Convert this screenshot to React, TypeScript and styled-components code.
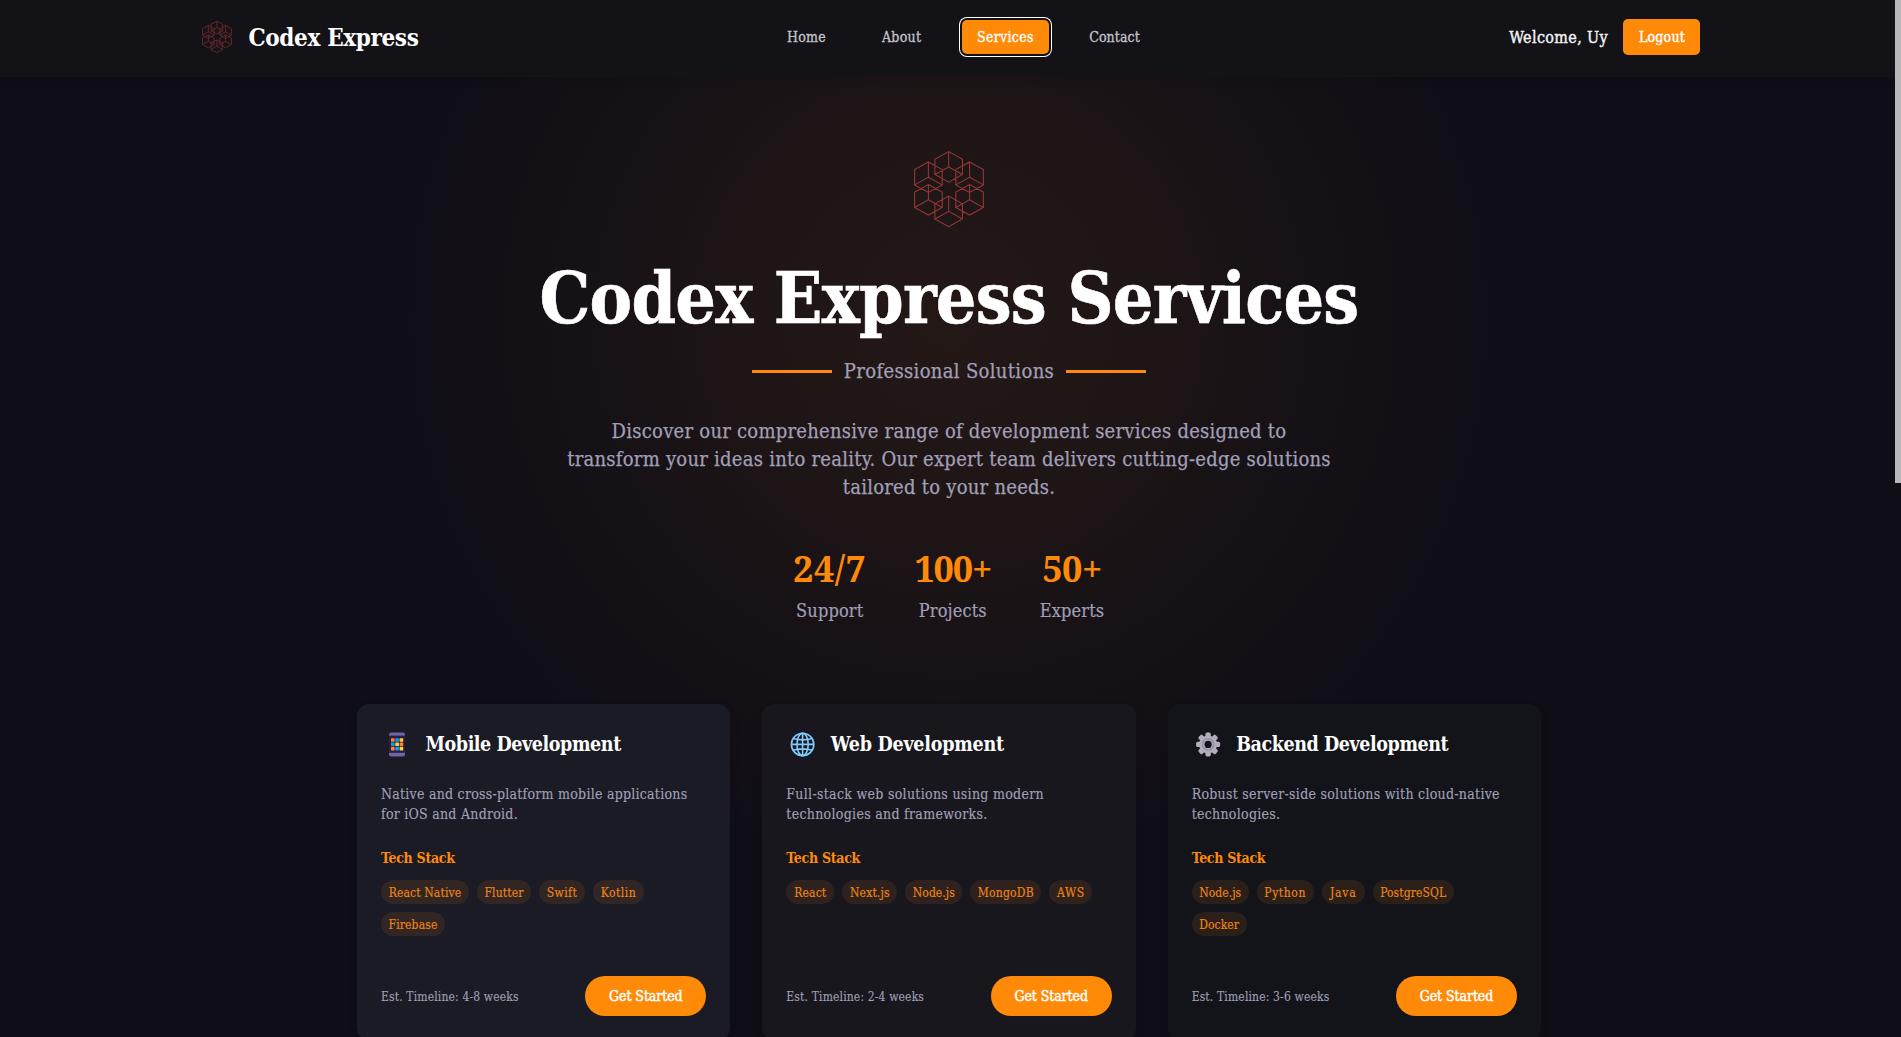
import React from "react";
import styled, { createGlobalStyle } from "styled-components";

const ORANGE = "#ff8a08";
const MUTED = "#a09fb6";
const SLAB = `"Roboto Slab", "DejaVu Serif Condensed", "DejaVu Serif", serif`;

const GlobalStyle = createGlobalStyle`
  *, *::before, *::after { box-sizing: border-box; }
  html, body { margin: 0; height: 100%; overflow: hidden; background: #0f0d16; }
  body { font-family: ${SLAB}; color: #fff; }
  h1, h2, h3, p { margin: 0; }
  button { font-family: inherit; border: 0; cursor: pointer; }
`;

const Page = styled.div`
  position: relative;
  height: 1037px;
  overflow: hidden;
  display: flex;
  flex-direction: column;
  background: radial-gradient(circle 560px at 949px 320px,
    rgba(255, 140, 20, 0.088) 0%, rgba(255, 140, 20, 0.062) 36%,
    rgba(225, 150, 30, 0.022) 74%, rgba(225, 150, 40, 0) 100%), #0f0d16;
`;

const ScrollThumb = styled.div`
  position: absolute;
  top: 0;
  right: 0;
  width: 6px;
  height: 483px;
  background: #b8b8ba;
`;

const Header = styled.header`
  flex: none;
  height: 77px;
  padding-bottom: 3px;
  display: flex;
  justify-content: center;
  background: #131217;
  box-shadow: 0 3px 10px rgba(0, 0, 0, 0.1);
`;

const HeaderInner = styled.div`
  width: 1500px;
  display: flex;
  align-items: center;
  justify-content: space-between;
`;

const Brand = styled.a`
  display: flex;
  align-items: center;
  gap: 16px;
  font-weight: 700;
  font-size: 24px;
  line-height: 32px;
  letter-spacing: -0.36px;
`;

const BrandName = styled.span`
  padding-top: 2px;
`;

const Nav = styled.nav`
  display: flex;
  align-items: center;
  gap: 25.3px;
  padding-right: 1px;
`;

const NavLink = styled.a<{ $w: number; $track: number; $active?: boolean }>`
  width: ${(p) => p.$w}px;
  height: 34px;
  line-height: 34px;
  text-align: center;
  white-space: nowrap;
  font-size: 14px;
  letter-spacing: ${(p) => p.$track}px;
  border-radius: 5px;
  color: ${(p) => (p.$active ? "#fff" : "#c4c3c9")};
  -webkit-text-stroke: 0.3px currentColor;
  background: ${(p) => (p.$active ? ORANGE : "transparent")};
  box-shadow: ${(p) => (p.$active ? "0 0 0 2px #101010, 0 0 0 3px #fff" : "none")};
`;

const Account = styled.div`
  display: flex;
  align-items: center;
  gap: 15.5px;
`;

const Welcome = styled.span`
  font-size: 16px;
  letter-spacing: 0.35px;
  color: #f2f2f4;
  -webkit-text-stroke: 0.4px currentColor;
`;

const LogoutButton = styled.button`
  width: 77px;
  height: 36px;
  padding: 0;
  border-radius: 5px;
  background: ${ORANGE};
  color: #fff;
  font-size: 14px;
  letter-spacing: 0.2px;
  -webkit-text-stroke: 0.4px currentColor;
`;

const Main = styled.main`
  width: 1898px;
  display: flex;
  flex-direction: column;
  align-items: center;
`;

const Hero = styled.section`
  display: flex;
  flex-direction: column;
  align-items: center;
  padding-top: 71.5px;
`;

const HeroTitle = styled.h1`
  margin-top: 26px;
  font-size: 71px;
  line-height: 84px;
  letter-spacing: -0.78px;
  font-weight: 700;
  white-space: nowrap;
  -webkit-text-stroke: 0.6px currentColor;
`;

const Subtitle = styled.div`
  margin-top: 19.5px;
  display: flex;
  align-items: center;
  gap: 12px;
  font-size: 20px;
  line-height: 24px;
  letter-spacing: 0.34px;
  color: ${MUTED};
  -webkit-text-stroke: 0.25px currentColor;
`;

const Rule = styled.span`
  width: 80px;
  height: 3px;
  background: ${ORANGE};
`;

const Lead = styled.p`
  margin-top: 34px;
  width: 800px;
  text-align: center;
  font-size: 20px;
  line-height: 28px;
  letter-spacing: 0.25px;
  color: ${MUTED};
  -webkit-text-stroke: 0.25px currentColor;
`;

const Stats = styled.div`
  margin-top: 46px;
  display: flex;
  gap: 48px;
`;

const Stat = styled.div<{ $w: number }>`
  width: ${(p) => p.$w}px;
  display: flex;
  flex-direction: column;
  align-items: center;
  gap: 9px;
  white-space: nowrap;
`;

const StatValue = styled.div<{ $track: number }>`
  font-family: "Roboto Slab", "Noto Serif", serif;
  font-weight: 700;
  font-size: 36px;
  line-height: 44px;
  letter-spacing: ${(p) => p.$track}px;
  color: ${ORANGE};
`;

const StatLabel = styled.div`
  font-size: 18px;
  line-height: 22px;
  letter-spacing: 0.15px;
  color: ${MUTED};
  -webkit-text-stroke: 0.2px currentColor;
`;

const Cards = styled.section`
  margin-top: 82px;
  width: 1184px;
  display: grid;
  grid-template-columns: repeat(3, 1fr);
  gap: 32px;
`;

const Card = styled.article<{ $bg: string }>`
  height: 336px;
  padding: 24px;
  border-radius: 12px;
  background: ${(p) => p.$bg};
  box-shadow: 0 4px 12px rgba(0, 0, 0, 0.06);
  display: flex;
  flex-direction: column;
`;

const CardHead = styled.div`
  display: flex;
  align-items: center;
  gap: 12.5px;
  height: 32px;
`;

const CardTitle = styled.h2<{ $track: number }>`
  font-size: 19.5px;
  line-height: 32px;
  padding-top: 2px;
  letter-spacing: ${(p) => p.$track}px;
  font-weight: 700;
  white-space: nowrap;
`;

const CardText = styled.p<{ $track: number }>`
  margin-top: 24px;
  font-size: 14px;
  line-height: 20px;
  letter-spacing: ${(p) => p.$track}px;
  color: ${MUTED};
  white-space: pre;
  -webkit-text-stroke: 0.15px currentColor;
`;

const StackTitle = styled.h3`
  margin-top: 24px;
  font-size: 14px;
  line-height: 20px;
  letter-spacing: -0.28px;
  font-weight: 700;
  color: ${ORANGE};
`;

const Tags = styled.div`
  margin-top: 12px;
  height: 56px;
  padding-right: 8px;
  display: flex;
  flex-wrap: wrap;
  align-content: flex-start;
  gap: 8px;
`;

const Tag = styled.span<{ $w: number; $track: number }>`
  width: ${(p) => p.$w}px;
  height: 24px;
  padding-top: 1px;
  line-height: 24px;
  border-radius: 12px;
  text-align: center;
  white-space: nowrap;
  font-size: 12px;
  letter-spacing: ${(p) => p.$track}px;
  color: #f08510;
  background: rgba(255, 138, 38, 0.1);
  -webkit-text-stroke: 0.15px currentColor;
`;

const CardFoot = styled.div`
  margin-top: 40px;
  display: flex;
  align-items: center;
  justify-content: space-between;
`;

const Timeline = styled.span`
  font-size: 12px;
  line-height: 16px;
  padding-top: 2px;
  letter-spacing: 0.15px;
  color: ${MUTED};
  -webkit-text-stroke: 0.12px currentColor;
`;

const StartButton = styled.button`
  width: 121px;
  height: 40px;
  padding: 0;
  border-radius: 20px;
  background: ${ORANGE};
  color: #fff;
  font-size: 14px;
  letter-spacing: -0.08px;
  -webkit-text-stroke: 0.45px currentColor;
`;

const cubeCenters: [number, number][] = [
  [176, 110], [115, 141], [239, 141], [115, 209], [239, 209], [176, 244],
];

const cubePath = (x: number, y: number) =>
  `M${x} ${y - 46}L${x + 41.5} ${y - 23}V${y + 23}L${x} ${y + 46}L${x - 41.5} ${y + 23}V${y - 23}Z` +
  `M${x} ${y - 46}V${y}L${x - 41.5} ${y + 23}M${x} ${y}L${x + 41.5} ${y + 23}`;

const cubes = cubeCenters.map(([x, y]) => cubePath(x, y)).join("");

type LogoProps = { width: number; height: number; color: string; shade: string; stroke: number };

function CubeLogo({ width, height, color, shade, stroke }: LogoProps) {
  return (
    <svg width={width} height={height} viewBox="66 56 222 244" fill="none">
      <path d={cubes} stroke={shade} strokeWidth={3} transform="rotate(90 177 177)" />
      <path d={cubes} stroke={color} strokeWidth={stroke} />
    </svg>
  );
}

function PhoneIcon() {
  const dots = ["#ff822d", "#00a6ed", "#ffc83d", "#00a6ed", "#fcd53f", "#ff822d", "#ff822d", "#00a6ed", "#fcd53f"];
  return (
    <svg width="32" height="32" viewBox="0 0 32 32">
      <rect x="8" y="4.5" width="16" height="24" rx="2.2" fill="#7064a6" />
      <rect x="8" y="7.6" width="16" height="17.2" fill="#321b41" />
      {dots.map((c, i) => (
        <rect key={i} x={10 + (i % 3) * 4.3} y={10.2 + Math.floor(i / 3) * 4.3} width="3.6" height="3.6" rx="0.6" fill={c} />
      ))}
    </svg>
  );
}

function GlobeIcon() {
  return (
    <svg width="32" height="32" viewBox="0 0 32 32" fill="none" stroke="#83cbff" strokeWidth="1.6">
      <circle cx="16.6" cy="16.4" r="11.2" />
      <ellipse cx="16.6" cy="16.4" rx="5.6" ry="11.2" />
      <path d="M16.6 5.2V27.6M5.4 16.4H27.8M7.2 10.6Q16.6 13.2 26 10.6M7.2 22.2Q16.6 19.6 26 22.2" />
    </svg>
  );
}

function GearIcon() {
  return (
    <svg width="32" height="32" viewBox="0 0 32 32">
      <g fill="#b4acbc">
        {[0, 45, 90, 135].map((a) => (
          <rect key={a} x="13.4" y="4.4" width="5.4" height="24" rx="1.6" transform={`rotate(${a} 16.1 16.4)`} />
        ))}
        <circle cx="16.1" cy="16.4" r="9" />
      </g>
      <circle cx="16.1" cy="16.4" r="5.6" fill="none" stroke="#998ea4" strokeWidth="1.6" />
      <circle cx="16.1" cy="16.4" r="3.6" fill="#131419" />
    </svg>
  );
}

const navItems = [
  { label: "Home", w: 69.7, track: 0.3 },
  { label: "About", w: 70.1, track: 0.3 },
  { label: "Services", w: 86.7, track: 0.3, active: true },
  { label: "Contact", w: 81, track: 0.1 },
];

const stats = [
  { value: "24/7", label: "Support", w: 73.5, track: 0.5 },
  { value: "100+", label: "Projects", w: 76.5, track: -1.2 },
  { value: "50+", label: "Experts", w: 66, track: -0.5 },
];

type Service = {
  title: string; track: number; bg: string; icon: React.ReactNode; text: string; textTrack: number;
  tags: [string, number, number][]; weeks: string;
};

const services: Service[] = [
  {
    title: "Mobile Development", track: -0.42, bg: "#1b1b25", icon: <PhoneIcon />,
    text: "Native and cross-platform mobile applications\nfor iOS and Android.", textTrack: 0.25,
    tags: [["React Native", 88, 0.13], ["Flutter", 54, 0.13], ["Swift", 46, 0.45], ["Kotlin", 51, 0.5], ["Firebase", 64, 0.15]],
    weeks: "4-8",
  },
  {
    title: "Web Development", track: -0.24, bg: "#18171d", icon: <GlobeIcon />,
    text: "Full-stack web solutions using modern\ntechnologies and frameworks.", textTrack: 0.3,
    tags: [["React", 48, 0.14], ["Next.js", 55, 0.15], ["Node.js", 57, 0.07], ["MongoDB", 71, 0.26], ["AWS", 43, 0.6]],
    weeks: "2-4",
  },
  {
    title: "Backend Development", track: -0.43, bg: "#131419", icon: <GearIcon />,
    text: "Robust server-side solutions with cloud-native\ntechnologies.", textTrack: 0.28,
    tags: [["Node.js", 57, 0.07], ["Python", 57, 0.6], ["Java", 43, 0.8], ["PostgreSQL", 81, 0.1], ["Docker", 55, 0.1]],
    weeks: "3-6",
  },
];

export default function App() {
  return (
    <Page>
      <GlobalStyle />
      <Header>
        <HeaderInner>
          <Brand>
            <CubeLogo width={32} height={34} color="#7e2f31" shade="#2a171b" stroke={5} />
            <BrandName>Codex Express</BrandName>
          </Brand>
          <Nav>
            {navItems.map((n) => (
              <NavLink key={n.label} $w={n.w} $track={n.track} $active={n.active}>{n.label}</NavLink>
            ))}
          </Nav>
          <Account>
            <Welcome>Welcome, Uy</Welcome>
            <LogoutButton>Logout</LogoutButton>
          </Account>
        </HeaderInner>
      </Header>
      <Main>
        <Hero>
          <CubeLogo width={74} height={81} color="#973638" shade="#1c1a1b" stroke={3.2} />
          <HeroTitle>Codex Express Services</HeroTitle>
          <Subtitle>
            <Rule />
            <span>Professional Solutions</span>
            <Rule />
          </Subtitle>
          <Lead>
            Discover our comprehensive range of development services designed to
            <br />
            transform your ideas into reality. Our expert team delivers cutting-edge solutions
            <br />
            tailored to your needs.
          </Lead>
          <Stats>
            {stats.map((s) => (
              <Stat key={s.label} $w={s.w}>
                <StatValue $track={s.track}>{s.value}</StatValue>
                <StatLabel>{s.label}</StatLabel>
              </Stat>
            ))}
          </Stats>
        </Hero>
        <Cards>
          {services.map((s) => (
            <Card key={s.title} $bg={s.bg}>
              <CardHead>
                {s.icon}
                <CardTitle $track={s.track}>{s.title}</CardTitle>
              </CardHead>
              <CardText $track={s.textTrack}>{s.text}</CardText>
              <StackTitle>Tech Stack</StackTitle>
              <Tags>
                {s.tags.map(([name, w, track]) => (
                  <Tag key={name} $w={w} $track={track}>{name}</Tag>
                ))}
              </Tags>
              <CardFoot>
                <Timeline>{`Est. Timeline: ${s.weeks} weeks`}</Timeline>
                <StartButton>Get Started</StartButton>
              </CardFoot>
            </Card>
          ))}
        </Cards>
      </Main>
      <ScrollThumb />
    </Page>
  );
}
